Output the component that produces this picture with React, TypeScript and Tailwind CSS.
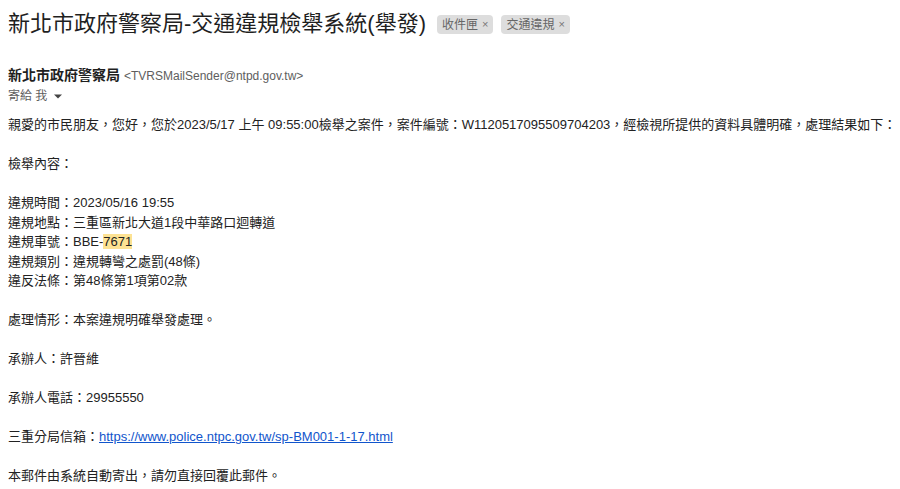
import { Fragment } from 'react'

const font = { fontFamily: '"Liberation Sans", "Noto Sans CJK TC", sans-serif' }

function Label({ text }: { text: string }) {
  return (
    <span className="inline-flex h-[19px] items-center gap-[4px] rounded-[4px] bg-[#dddddd] px-[5px] text-[12px] leading-none text-[#666666]">
      {text}
      <span className="text-[11px] text-[#777777]">×</span>
    </span>
  )
}

const details: [string, React.ReactNode][] = [
  ['違規時間：', '2023/05/16 19:55'],
  ['違規地點：', '三重區新北大道1段中華路口迴轉道'],
  [
    '違規車號：',
    <Fragment>
      BBE-<span className="bg-[#fde293]">7671</span>
    </Fragment>,
  ],
  ['違規類別：', '違規轉彎之處罰(48條)'],
  ['違反法條：', '第48條第1項第02款'],
]

export default function App() {
  return (
    <div className="h-[489px] w-[900px] overflow-hidden bg-white text-[#222222]" style={font}>
      <div className="flex items-center gap-[11px] px-[8px] pt-[11px]">
        <h1 className="text-[22px] font-normal leading-[26px] text-[#1f1f1f]">
          新北市政府警察局-交通違規檢舉系統(舉發)
        </h1>
        <div className="flex gap-[8px] pt-[1px]">
          <Label text="收件匣" />
          <Label text="交通違規" />
        </div>
      </div>

      <div className="px-[8px] pt-[28px]">
        <div className="flex items-baseline gap-[4px] leading-[20px]">
          <span className="text-[14px] font-bold text-[#1f1f1f]">新北市政府警察局</span>
          <span className="text-[12px] text-[#5e5e5e]">&lt;TVRSMailSender@ntpd.gov.tw&gt;</span>
        </div>
        <div className="flex items-center gap-[4px] text-[12px] leading-[20px] text-[#5e5e5e]">
          <span>寄給 我</span>
          <svg width="10" height="10" viewBox="0 0 10 10" className="ml-[2px]">
            <path d="M1 3.5h8L5 7.5z" fill="#444" />
          </svg>
        </div>
      </div>

      <div className="px-[8px] pt-[9px] text-[13px] leading-[19.5px]">
        <p className="whitespace-nowrap">
          親愛的市民朋友，您好，您於2023/5/17 上午 09:55:00檢舉之案件，案件編號：W1120517095509704203，經檢視所提供的資料具體明確，處理結果如下：
        </p>
        <br />
        <p>檢舉內容：</p>
        <br />
        {details.map(([k, v]) => (
          <p key={k}>
            {k}
            {v}
          </p>
        ))}
        <br />
        <p>處理情形：本案違規明確舉發處理。</p>
        <br />
        <p>承辦人：許晉維</p>
        <br />
        <p>承辦人電話：29955550</p>
        <br />
        <p>
          三重分局信箱：
          <a href="#" className="text-[#1155cc] underline">
            https://www.police.ntpc.gov.tw/sp-BM001-1-17.html
          </a>
        </p>
        <br />
        <p>本郵件由系統自動寄出，請勿直接回覆此郵件。</p>
      </div>
    </div>
  )
}
